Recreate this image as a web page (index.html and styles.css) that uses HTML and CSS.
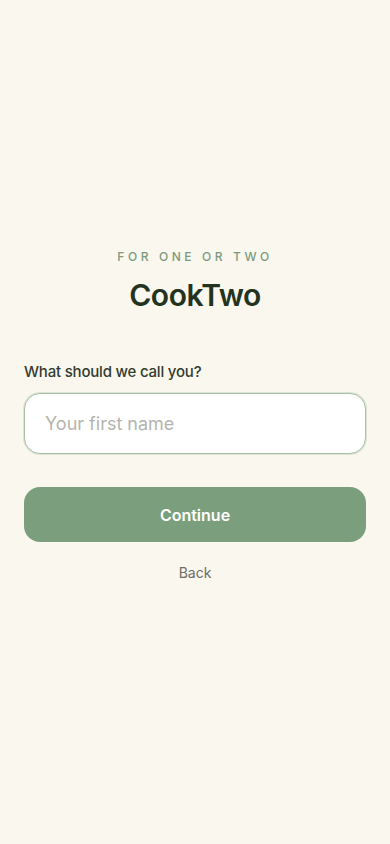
FILE: index.html
```html
<!DOCTYPE html>
<html lang="en">

<head>
    <meta charset="UTF-8">
    <meta name="viewport" content="width=device-width, initial-scale=1.0">
    <title>CookTwo</title>
    <link rel="stylesheet" href="styles.css">
</head>

<body>
    <div class="page">
        <div class="brand">
            <p class="eyebrow">For one or two</p>
            <h1 class="title">CookTwo</h1>
        </div>
        <form class="form">
            <label class="label" for="name">What should we call you?</label>
            <input class="field" id="name" type="text" placeholder="Your first name">
            <button class="primary" type="button">Continue</button>
            <button class="link" type="button">Back</button>
        </form>
    </div>
</body>

</html>
```

FILE: styles.css
```css
* {
    box-sizing: border-box;
}

body {
    margin: 0;
    background-color: #faf7ee;
    font-family: Inter, "Noto Sans", sans-serif;
    color: #22311f;
}

.page {
    min-height: 100vh;
    display: flex;
    flex-direction: column;
    justify-content: center;
    padding: 0 24px 14px;
}

.brand {
    text-align: center;
}

.eyebrow {
    margin: 0;
    font-size: 12px;
    font-weight: 500;
    letter-spacing: 3.6px;
    text-transform: uppercase;
    color: #7d9a7e;
}

.title {
    margin: 13px 0 0;
    font-size: 30px;
    font-weight: 600;
    letter-spacing: -0.5px;
    color: #23331f;
}

.form {
    display: flex;
    flex-direction: column;
    margin-top: 49px;
}

.label {
    font-size: 15px;
    font-weight: 500;
    letter-spacing: -0.2px;
    color: #323c2f;
    margin-bottom: 12px;
}

.field {
    height: 61px;
    padding: 0 20px;
    border: 1px solid #a9c0a6;
    border-radius: 16px;
    background: #fff;
    box-shadow: 0 0 0 1px rgba(169, 192, 166, 0.35);
    font-family: inherit;
    font-size: 18px;
    color: #22311f;
    outline: none;
}

.field::placeholder {
    color: #b4b4ae;
}

.primary {
    margin-top: 33px;
    height: 55px;
    border: 0;
    border-radius: 16px;
    background-color: #7b9f7d;
    color: #fff;
    font-family: inherit;
    font-size: 16px;
    font-weight: 600;
    cursor: pointer;
}

.link {
    margin-top: 22px;
    align-self: center;
    padding: 0;
    border: 0;
    background: none;
    font-family: inherit;
    font-size: 14px;
    color: #6d6f68;
    cursor: pointer;
}
```
